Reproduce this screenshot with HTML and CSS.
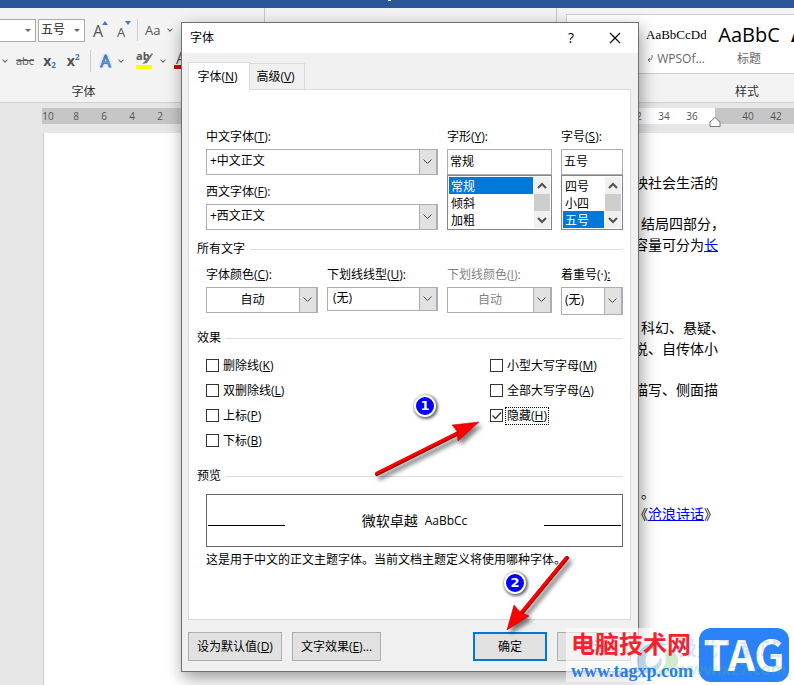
FILE: index.html
```
<!DOCTYPE html>
<html lang="zh-CN">
<head>
    <meta charset="UTF-8">
    <meta name="viewport" content="width=device-width, initial-scale=1.0">
    <title>字体</title>
    <link rel="stylesheet" href="styles.css">
</head>
<body>
    <div class="title-bar"><span></span></div>

    <div class="ribbon">
        <div class="group font-group">
            <div class="tools">
                <button class="combo font-name" aria-label="字体名称"><i class="tri"></i></button>
                <button class="combo font-size">五号<i class="tri"></i></button>
                <button class="tool grow" aria-label="增大字号">
                    <svg width="18" height="20" viewBox="0 0 18 20"><text x="2" y="17" font-size="16">A</text><path d="M11 5l3-4 3 4z" fill="#3f7ab8"/></svg>
                </button>
                <button class="tool grow" aria-label="减小字号">
                    <svg width="18" height="20" viewBox="0 0 18 20"><text x="3" y="17" font-size="13">A</text><path d="M11 1h6l-3 4z" fill="#3f7ab8"/></svg>
                </button>
                <i class="sep"></i>
                <button class="tool case">Aa<i class="chev"></i></button>
            </div>
            <div class="tools second">
                <i class="chev"></i>
                <button class="tool strike">abc</button>
                <button class="tool bold">x<sub>2</sub></button>
                <button class="tool bold">x<sup>2</sup></button>
                <i class="sep"></i>
                <button class="tool glow">A<i class="chev"></i></button>
                <button class="tool" aria-label="突出显示">
                    <svg width="18" height="20" viewBox="0 0 18 20"><text x="1" y="9" font-size="11" font-weight="bold">ab</text><path d="M17 2l-7 8-3 3 5-1 6-9z" fill="#777"/><path d="M1 14h16v4H1z" fill="#ff0"/></svg><i class="chev"></i>
                </button>
                <button class="tool color" aria-label="字体颜色">
                    <svg width="18" height="20" viewBox="0 0 18 20"><text x="3" y="13" font-size="16">A</text><path d="M1 14h16v4H1z" fill="#e00000"/></svg>
                </button>
            </div>
            <div class="group-name">字体</div>
        </div>
        <div class="group para-group"></div>
        <div class="group style-group">
            <div class="gallery">
                <a href="#" class="style-card normal"><span>AaBbCcDd</span><small><svg width="7" height="8" viewBox="0 0 7 8"><path d="M5 0v3q0 2-3 2M3 3L1 5l2 2" fill="none" stroke="#777"/></svg> WPSOf...</small></a>
                <a href="#" class="style-card heading"><span>AaBbC</span><small>标题</small></a>
                <a href="#" class="style-card heading first"><span>AaBbC</span></a>
            </div>
            <div class="group-name">样式</div>
        </div>
    </div>

    <div class="workspace">
        <div class="ruler">
            <span>10</span><span>8</span><span>6</span><span>4</span><span>2</span><span></span><span>2</span><span>4</span><span>6</span><span>8</span><span>10</span><span>12</span><span>14</span><span>16</span><span>18</span><span>20</span><span>22</span><span>24</span><span>26</span><span>28</span><span>30</span><span>32</span><span>34</span><span>36</span><span></span><span>40</span><span>42</span>
            <svg class="indent" width="12" height="10" viewBox="0 0 12 10"><path d="M1 9.500V5L6 .5 11 5v4.500z" fill="#fff" stroke="#777"/></svg>
        </div>
        <div class="page">
            <p>映社会生活的</p>
            <p class="blank1"><span class="shift">结局四部分，</span><br>容量可分为<a href="#">长</a></p>
            <p class="blank3"><span class="shift">科幻、悬疑、</span><br>说、自传体小</p>
            <p class="blank1">描写、侧面描</p>
            <p class="blank4"><span class="shift">。</span><br>《<a href="#">沧浪诗话</a>》</p>
        </div>
    </div>

    <div class="dialog" role="dialog" aria-label="字体">
        <div class="dialog-title">
            <span>字体</span>
            <button class="help" aria-label="帮助">?</button>
            <button class="close" aria-label="关闭"><svg width="12" height="12" viewBox="0 0 12 12"><path d="M1 1l10 10M11 1L1 11" stroke="#000" stroke-width="1.200"/></svg></button>
        </div>
        <div class="dialog-body">
            <div class="tabs">
                <button class="tab active">字体(<u>N</u>)</button>
                <button class="tab">高级(<u>V</u>)</button>
            </div>
            <div class="panel">
                <div class="fields">
                    <div class="wide">
                        <div class="field">
                            <label for="cn-font">中文字体(<u>T</u>):</label>
                            <select id="cn-font"><option>+中文正文</option></select>
                        </div>
                        <div class="field">
                            <label for="en-font">西文字体(<u>F</u>):</label>
                            <select id="en-font"><option>+西文正文</option></select>
                        </div>
                    </div>
                    <div class="field">
                        <label for="shape">字形(<u>Y</u>):</label>
                        <input type="text" id="shape" value="常规">
                        <div class="list">
                            <select size="3" aria-label="字形列表"><option selected>常规</option><option>倾斜</option><option>加粗</option></select>
                            <svg width="16" height="51" viewBox="0 0 16 51"><path d="M0 0h16v51H0z" fill="#f0f0f0"/><path d="M0 17h16v17H0z" fill="#cdcdcd"/><path d="M4 11l4-4 4 4M4 41l4 4 4-4" fill="none" stroke="#505050" stroke-width="2"/></svg>
                        </div>
                    </div>
                    <div class="field">
                        <label for="size">字号(<u>S</u>):</label>
                        <input type="text" id="size" value="五号">
                        <div class="list">
                            <select size="3" aria-label="字号列表"><option>四号</option><option>小四</option><option selected>五号</option></select>
                            <svg width="16" height="51" viewBox="0 0 16 51"><path d="M0 0h16v51H0z" fill="#f0f0f0"/><path d="M0 17h16v17H0z" fill="#cdcdcd"/><path d="M4 11l4-4 4 4M4 41l4 4 4-4" fill="none" stroke="#505050" stroke-width="2"/></svg>
                        </div>
                    </div>
                </div>

                <h3>所有文字</h3>
                <div class="fields all-text">
                    <div class="field">
                        <label for="color">字体颜色(<u>C</u>):</label>
                        <select id="color" class="auto"><option>自动</option></select>
                    </div>
                    <div class="field">
                        <label for="line">下划线线型(<u>U</u>):</label>
                        <select id="line" class="short"><option>(无)</option></select>
                    </div>
                    <div class="field">
                        <label for="line-color" class="off">下划线颜色(<u>I</u>):</label>
                        <select id="line-color" class="auto" disabled><option>自动</option></select>
                    </div>
                    <div class="field">
                        <label for="mark">着重号(·)<u>:</u></label>
                        <select id="mark" class="tall"><option>(无)</option></select>
                    </div>
                </div>

                <h3 class="effects">效果</h3>
                <div class="checks">
                    <div>
                        <label><input type="checkbox"><span>删除线(<u>K</u>)</span></label>
                        <label><input type="checkbox"><span>双删除线(<u>L</u>)</span></label>
                        <label><input type="checkbox"><span>上标(<u>P</u>)</span></label>
                        <label><input type="checkbox"><span>下标(<u>B</u>)</span></label>
                    </div>
                    <div>
                        <label><input type="checkbox"><span>小型大写字母(<u>M</u>)</span></label>
                        <label><input type="checkbox"><span>全部大写字母(<u>A</u>)</span></label>
                        <label><input type="checkbox" checked><span class="focus">隐藏(<u>H</u>)</span></label>
                    </div>
                </div>

                <h3 class="sample">预览</h3>
                <div class="preview"><i></i><span>微软卓越</span><b>AaBbCc</b><i></i></div>
                <p class="hint">这是用于中文的正文主题字体。当前文档主题定义将使用哪种字体。</p>
            </div>
            <div class="buttons">
                <button class="default">设为默认值(<u>D</u>)</button>
                <button class="effect">文字效果(<u>E</u>)...</button>
                <button class="ok">确定</button>
                <button class="cancel">取消</button>
            </div>
        </div>
    </div>

    <!-- numbered steps over the dialog -->
    <svg class="arrow arrow-1" width="112" height="62" viewBox="0 0 112 62">
        <path d="M3 54L85 13" stroke="#900" stroke-width="4" stroke-linecap="round"/>
        <path d="M3 53L85 12" stroke="#f00" stroke-width="3" stroke-linecap="round"/>
        <path d="M105 2L78 5l5 6 1 10z" fill="#f00" stroke="#a00" stroke-width=".5"/>
    </svg>
    <svg class="arrow arrow-2" width="70" height="82" viewBox="0 0 70 82">
        <path d="M62 3L16 59" stroke="#900" stroke-width="4" stroke-linecap="round"/>
        <path d="M61 3L15 59" stroke="#f00" stroke-width="3" stroke-linecap="round"/>
        <path d="M2 75L9 50l6 7 9 4z" fill="#f00" stroke="#a00" stroke-width=".5"/>
    </svg>
    <span class="step step-1">1</span>
    <span class="step step-2">2</span>

    <div class="watermark">
        <svg class="swirl" width="46" height="42" viewBox="0 0 46 42"><path d="M4 29C-2 12 18 0 34 8 18 8 9 17 12 28c4 5 14-1 14-8 6 6-4 18-14 16-4-1-7-4-8-7z" fill="#8bb5dc"/><path d="M17 38C33 34 35 20 28 12c16 0 21 12 12 20-6 6-16 8-23 6z" fill="#a5d6a0"/></svg>
        <div class="site">
            <strong>电脑技术网</strong>
            <a href="#">www.tagxp.com</a>
        </div>
        <div class="tag">TAG</div>
        <div class="faint"><span>极光下载站</span><em>www.xz7.com</em></div>
    </div>
</body>
</html>
```
FILE: styles.css
```
* {
    box-sizing: border-box;
}

body {
    margin: 0;
    min-height: 100vh;
    display: flex;
    flex-direction: column;
    overflow: hidden;
    position: relative;
    background: #e6e6e6;
    color: #000;
    font-family: "Open Sans", "Noto Sans CJK SC", sans-serif;
    font-size: 12px;
    line-height: 16px;
}

button, select, input {
    font: inherit;
    color: inherit;
}

button {
    padding: 0;
    white-space: nowrap;
}

u {
    text-underline-offset: 1px;
}

svg {
    overflow: visible;
}

.title-bar {
    height: 8px;
    background: #2b579a;
    padding-right: 15px;
}

.title-bar span {
    display: block;
    width: 3px;
    height: 1px;
    margin: 0 auto;
    background: #fff;
}

/* ribbon */
.ribbon {
    height: 95px;
    display: flex;
    background: #f3f3f3;
    border-bottom: 1px solid #cfcfcf;
}

.group {
    display: flex;
    flex-direction: column;
}

.font-group {
    width: 265px;
    padding-top: 10px;
    border-right: 1px solid #c6c6c6;
}

.para-group {
    flex: 1;
    border-right: 1px solid #c6c6c6;
}

.style-group {
    width: 237px;
    padding: 6px 0 0 9px;
}

.tools {
    height: 24px;
    display: flex;
    align-items: center;
    color: #555;
}

.tools.second {
    margin-top: 7px;
    gap: 9px;
    padding-left: 3px;
}

.tool {
    display: flex;
    align-items: center;
    background: none;
    border: 0;
}

.tool text {
    fill: #555;
}

.combo {
    height: 23px;
    display: flex;
    align-items: center;
    justify-content: space-between;
    background: #fff;
    border: 1px solid #ababab;
    color: #222;
    padding: 0 4px 0 2px;
}

.font-name {
    width: 36px;
    border-left: 0;
    justify-content: flex-end;
    margin-right: 2px;
}

.font-size {
    width: 47px;
    margin-right: 6px;
}

.tri {
    border: 3px solid transparent;
    border-top-color: #666;
    border-bottom: 0;
}

.chev {
    width: 4px;
    height: 4px;
    border: solid #666;
    border-width: 0 1px 1px 0;
    transform: rotate(45deg);
    margin: 0 3px 2px 8px;
}

.second > .chev {
    margin: 0 0 2px;
}

.grow {
    margin-right: 5px;
}

.sep {
    width: 1px;
    height: 22px;
    background: #ccc;
}

.case {
    margin-left: 7px;
    font-size: 13px;
}

.strike {
    font-size: 11px;
    text-decoration: line-through;
}

.bold {
    font-weight: bold;
    font-size: 14px;
    margin-right: 2px;
}

.bold sub, .bold sup {
    font-size: 8px;
    line-height: 8px;
    color: #3f7ab8;
}

.bold sup {
    align-self: flex-start;
}

.bold sub {
    align-self: flex-end;
}

.glow {
    font-size: 16px;
    color: #fff;
    -webkit-text-stroke: 1px #3f7ab8;
    text-shadow: 0 0 3px #7fb2e5;
}

.color {
    margin-left: -4px;
}

.group-name {
    flex: 1;
    display: flex;
    align-items: center;
    justify-content: center;
    color: #333;
}

.font-group .group-name {
    padding: 8px 97px 0 0;
}

.style-group .group-name {
    padding: 8px 0 0 134px;
}

.gallery {
    height: 60px;
    display: flex;
    background: #fff;
    border: 1px solid #d0d0d0;
    border-right: 0;
    overflow: hidden;
    padding-left: 78px;
}

.style-card {
    flex: none;
    width: 72px;
    display: flex;
    flex-direction: column;
    align-items: center;
    color: #000;
    text-decoration: none;
}

.style-card span {
    height: 34px;
    line-height: 40px;
    white-space: nowrap;
}

.style-card small {
    font-size: 12px;
    line-height: 20px;
    color: #666;
    white-space: nowrap;
}

.style-card.normal {
    width: 62px;
}

.style-card.normal span {
    width: 60px;
    overflow: hidden;
    font: 13px/40px "Liberation Serif", serif;
}

.heading {
    margin-left: 6px;
}

.heading span {
    font-size: 20px;
}

.heading.first {
    align-items: flex-start;
    font-weight: bold;
}

/* ruler and document */
.workspace {
    flex: 1;
    display: flex;
    flex-direction: column;
}

.ruler {
    position: relative;
    height: 16px;
    margin: 5px 0 9px 42px;
    display: flex;
    background: linear-gradient(90deg, #c6c6c6 146px, #fff 146px, #fff 673px, #c6c6c6 673px);
    font-size: 10px;
    color: #555;
}

.ruler span {
    flex: none;
    width: 28px;
    text-align: center;
}

.ruler span:first-child {
    margin-left: -8px;
}

.indent {
    position: absolute;
    left: 667px;
    top: 9px;
}

.page {
    flex: 1;
    margin-left: 43px;
    padding: 39px 0 0 590px;
    background: #fff;
    border-left: 1px solid #ccc;
    font-size: 14px;
    line-height: 21px;
    white-space: nowrap;
}

.page p {
    margin: 0;
}

.page .blank1 {
    margin-top: 20px;
}

.page .blank3 {
    margin-top: 62px;
}

.page .blank4 {
    margin-top: 82px;
}

.page .shift {
    padding-left: 7px;
}

a {
    color: #00f;
}

/* font dialog */
.dialog {
    position: absolute;
    left: 181px;
    top: 22px;
    width: 458px;
    background: #f0f0f0;
    border: 1px solid #707070;
    box-shadow: 2px 6px 16px rgba(0, 0, 0, 0.4);
}

.dialog-title {
    height: 30px;
    display: flex;
    align-items: center;
    background: #fff;
    padding: 0 17px 0 8px;
}

.dialog-title span {
    flex: 1;
}

.dialog-title button {
    background: none;
    border: 0;
    display: flex;
}

.help {
    font-size: 14px;
    margin-right: 35px;
}

.dialog-body {
    padding: 9px 7px 10px 6px;
}

.tabs {
    display: flex;
    align-items: flex-end;
}

.tab {
    height: 26px;
    width: 55px;
    padding-right: 3px;
    background: #f0f0f0;
    border: 1px solid #d9d9d9;
    border-left: 0;
    border-bottom: 0;
}

.tab.active {
    position: relative;
    width: 62px;
    height: 28px;
    margin-bottom: -1px;
    background: #fff;
    border-left: 1px solid #d9d9d9;
}

.panel {
    min-height: 531px;
    padding: 39px 7px 0 17px;
    background: #fff;
    border: 1px solid #d9d9d9;
}

.fields {
    display: grid;
    grid-template-columns: 1fr 105px 62px;
    column-gap: 9px;
}

.all-text {
    grid-template-columns: 112px 1fr 105px 62px;
}

.field {
    display: flex;
    flex-direction: column;
}

.field label {
    margin-bottom: 4px;
    white-space: nowrap;
}

.field label.off {
    color: #838383;
}

.wide {
    display: flex;
    flex-direction: column;
    gap: 9px;
}

.field > select {
    appearance: none;
    width: 100%;
    height: 26px;
    padding: 0 20px 2px 3px;
    border: 1px solid #abadb3;
    border-right-width: 2px;
    border-radius: 0;
    outline: 0;
    opacity: 1;
    background:
        url("data:image/svg+xml,%3Csvg xmlns='http://www.w3.org/2000/svg' width='9' height='6'%3E%3Cpath d='M.5 .5l4 4 4-4' fill='none' stroke='%23444'/%3E%3C/svg%3E") no-repeat right 4px center,
        linear-gradient(90deg, #abadb3 1px, #e1e1e1 1px) no-repeat right / 17px 100%,
        #fff;
}

.field > select.auto {
    text-align: center;
    text-align-last: center;
    padding: 0 18px 0 0;
}

.field > select:disabled {
    color: #838383;
}

.field > select.short {
    height: 24px;
    padding-left: 5px;
}

.field > select.tall {
    height: 28px;
}

.field input {
    width: 100%;
    height: 26px;
    padding: 0 2px 2px;
    border: 1px solid #abadb3;
    outline: 0;
}

.list {
    display: flex;
    height: 55px;
    padding: 1px;
    border: 1px solid #828790;
}

.list select {
    flex: 1;
    min-width: 0;
    height: 51px;
    padding: 0;
    border: 0;
    border-radius: 0;
    outline: 0;
    overflow: hidden;
    scrollbar-width: none;
    background: #fff;
}

.list option {
    height: 17px;
    min-height: 17px;
    line-height: 16px;
    padding: 0 2px;
    border-radius: 0;
}

.list option:checked {
    color: #fff;
    background: #0078d7 linear-gradient(#0078d7, #0078d7);
}

.list svg {
    flex: none;
    margin-left: 1px;
}

h3 {
    display: flex;
    align-items: center;
    gap: 5px;
    margin: 11px 0 10px -9px;
    font-size: 12px;
    font-weight: normal;
}

h3::after {
    content: "";
    flex: 1;
    height: 1px;
    background: #dcdcdc;
}

h3.effects {
    margin-top: 15px;
    margin-bottom: 7px;
}

h3.sample {
    margin-top: 15px;
}

.checks {
    display: grid;
    grid-template-columns: 284px 1fr;
}

.checks label {
    display: flex;
    align-items: center;
    gap: 2px;
    height: 25px;
    white-space: nowrap;
}

.checks span {
    padding: 0 1px;
    border: 1px solid transparent;
}

.checks .focus {
    border: 1px dotted #000;
}

.checks input {
    appearance: none;
    width: 13px;
    height: 13px;
    margin: 0;
    border: 1px solid #333;
    background: #fff;
}

.checks input:checked {
    background: url("data:image/svg+xml,%3Csvg xmlns='http://www.w3.org/2000/svg' width='11' height='11'%3E%3Cpath d='M1.500 5.500l3 3 5.500-6' fill='none' stroke='%23222' stroke-width='1.200'/%3E%3C/svg%3E");
}

.preview {
    height: 53px;
    display: flex;
    align-items: center;
    border: 1px solid #646464;
    padding: 0 1px;
    font-size: 14px;
}

.preview i {
    width: 77px;
    height: 1px;
    margin-top: 10px;
    background: #000;
}

.preview span {
    margin-left: auto;
}

.preview b {
    margin: 0 auto 0 7px;
    font-size: 12px;
    font-weight: normal;
}

.hint {
    margin: 5px 0 0;
    white-space: nowrap;
}

.buttons {
    display: flex;
    gap: 10px;
    margin-top: 12px;
}

.buttons button {
    height: 29px;
    width: 74px;
    background: #e1e1e1;
    border: 1px solid #adadad;
}

.buttons .default {
    width: 94px;
}

.buttons .effect {
    width: 89px;
}

.buttons .ok {
    margin-left: auto;
    border: 2px solid #0078d7;
}

/* arrows and step numbers */
.arrow {
    position: absolute;
    filter: drop-shadow(3px 4px 2px rgba(0, 0, 0, 0.5));
}

.arrow-1 {
    left: 374px;
    top: 420px;
}

.arrow-2 {
    left: 505px;
    top: 555px;
}

.step {
    position: absolute;
    width: 22px;
    height: 22px;
    border: 2px solid #fff;
    border-radius: 50%;
    background: #00f;
    color: #fff;
    font: bold 13px/18px "DejaVu Sans", sans-serif;
    text-align: center;
    box-shadow: 1px 1px 3px 1px rgba(0, 0, 0, 0.6);
}

.step-1 {
    left: 414px;
    top: 395px;
}

.step-2 {
    left: 504px;
    top: 572px;
}

.watermark {
    position: absolute;
    right: 0;
    bottom: 3px;
    width: 228px;
    height: 54px;
    display: flex;
    justify-content: space-between;
    padding: 0 5px;
    background: rgba(255, 255, 255, 0.6);
}

.swirl {
    position: absolute;
    left: 68px;
    top: 9px;
    opacity: 0.5;
}

.site {
    position: relative;
    display: flex;
    flex-direction: column;
}

.site strong {
    font-size: 24px;
    line-height: 32px;
    color: #f5222d;
    white-space: nowrap;
}

.site a {
    font: bold 18px/22px "Liberation Serif", serif;
    color: #2a7de1;
    text-decoration: none;
}

.tag {
    width: 90px;
    border-radius: 12px;
    background: #2b83fb;
    color: #fff;
    font-family: "Noto Sans CJK SC", sans-serif;
    font-size: 42px;
    font-weight: bold;
    line-height: 50px;
    text-align: center;
}

.faint {
    position: absolute;
    left: 110px;
    top: 7px;
    display: flex;
    flex-direction: column;
    font-size: 21px;
    line-height: 24px;
    font-weight: bold;
    color: rgba(60, 120, 200, 0.2);
    white-space: nowrap;
}

.faint em {
    font-size: 16px;
    line-height: 20px;
    font-style: normal;
    color: rgba(80, 180, 120, 0.25);
}
```
